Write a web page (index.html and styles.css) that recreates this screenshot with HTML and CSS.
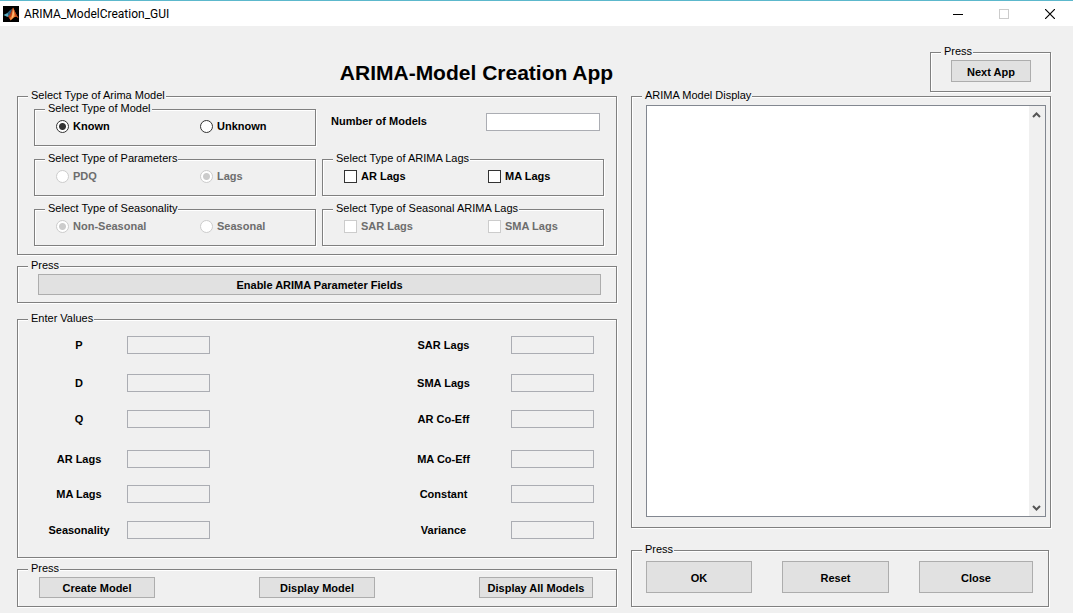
FILE: index.html
```html
<!DOCTYPE html>
<html lang="en">
<head>
<meta charset="utf-8">
<title>ARIMA_ModelCreation_GUI</title>
<link rel="stylesheet" href="styles.css">
</head>
<body>
<header class="titlebar">
  <svg class="app-icon" viewBox="0 0 16 16" width="16" height="16" aria-hidden="true">
    <rect width="16" height="16" fill="#000"/>
    <path d="M.5 9 L4.500 7 L7 4.500 L7.500 7 L5.500 11 L3.500 10.500Z" fill="#5fb0c4"/>
    <path d="M4.500 7 L8.500 3 L9 4 L7 9 L5.500 10.500Z" fill="#2b5f80"/>
    <path d="M10 1.500 C8.500 4 8 8 5 10.500 L7.500 14 C8.500 12.500 9 10.500 10.500 9.500 L10.500 2.500Z" fill="#b8401c"/>
    <path d="M10 1.500 C11.500 4 12.500 8 15.500 12 C13 10.500 12 10.500 11 11.500 L7.500 14.500 L6.500 12 C9 11 9.500 6 10 1.500Z" fill="#f07c2c"/>
    <path d="M10 3 L11 7 L10.500 10.500 L8 13.500 C9.500 10 9.500 7 10 3Z" fill="#fbc080"/>
    <path d="M10.500 2.500 C12 5 13 8.500 15.500 12 L12.500 10 C11.800 7.500 11 5 10.500 2.500Z" fill="#b8401c"/>
  </svg>
  <span class="titlebar-text">ARIMA_ModelCreation_GUI</span>
  <div class="window-controls">
    <button class="window-button" type="button" aria-label="Minimize"><svg width="10" height="10" viewBox="0 0 10 10" shape-rendering="crispEdges"><path d="M0 5.500H10" stroke="#000" fill="none"/></svg></button>
    <button class="window-button" type="button" aria-label="Maximize" disabled><svg width="10" height="10" viewBox="0 0 10 10"><rect x=".5" y=".5" width="9" height="9" stroke="#ccc" fill="none"/></svg></button>
    <button class="window-button" type="button" aria-label="Close window"><svg width="10" height="10" viewBox="0 0 10 10"><path d="M0 0L10 10M10 0L0 10" stroke="#000" stroke-width="1.200" fill="none"/></svg></button>
  </div>
</header>

<div class="heading">
  <h1 class="title">ARIMA-Model Creation App</h1>
  <fieldset class="panel">
    <legend>Press</legend>
    <div class="next-body"><button class="push push-next" type="button">Next App</button></div>
  </fieldset>
</div>

<main class="workspace">
  <div class="column column-left">
    <fieldset class="panel">
      <legend>Select Type of Arima Model</legend>
      <div class="model-grid">
        <fieldset class="panel">
          <legend>Select Type of Model</legend>
          <div class="options">
            <label class="option"><input type="radio" name="model" checked>Known</label>
            <label class="option"><input type="radio" name="model">Unknown</label>
          </div>
        </fieldset>
        <div class="count">
          <label for="count">Number of Models</label>
          <input class="field count-field" id="count" type="text">
        </div>
        <fieldset class="panel">
          <legend>Select Type of Parameters</legend>
          <div class="options">
            <label class="option"><input type="radio" name="params" disabled>PDQ</label>
            <label class="option"><input type="radio" name="params" checked disabled>Lags</label>
          </div>
        </fieldset>
        <fieldset class="panel">
          <legend>Select Type of ARIMA Lags</legend>
          <div class="options">
            <label class="option"><input type="checkbox">AR Lags</label>
            <label class="option"><input type="checkbox">MA Lags</label>
          </div>
        </fieldset>
        <fieldset class="panel">
          <legend>Select Type of Seasonality</legend>
          <div class="options">
            <label class="option"><input type="radio" name="season" checked disabled>Non-Seasonal</label>
            <label class="option"><input type="radio" name="season" disabled>Seasonal</label>
          </div>
        </fieldset>
        <fieldset class="panel">
          <legend>Select Type of Seasonal ARIMA Lags</legend>
          <div class="options">
            <label class="option"><input type="checkbox" disabled>SAR Lags</label>
            <label class="option"><input type="checkbox" disabled>SMA Lags</label>
          </div>
        </fieldset>
      </div>
    </fieldset>

    <fieldset class="panel enable-panel">
      <legend>Press</legend>
      <div class="enable-body"><button class="push" type="button">Enable ARIMA Parameter Fields</button></div>
    </fieldset>

    <fieldset class="panel values-panel">
      <legend>Enter Values</legend>
      <div class="values">
        <label class="value-label" for="p">P</label><input class="field" id="p" type="text" disabled>
        <label class="value-label second" for="sar">SAR Lags</label><input class="field" id="sar" type="text" disabled>
        <label class="value-label" for="d">D</label><input class="field" id="d" type="text" disabled>
        <label class="value-label second" for="sma">SMA Lags</label><input class="field" id="sma" type="text" disabled>
        <label class="value-label" for="q">Q</label><input class="field" id="q" type="text" disabled>
        <label class="value-label second" for="arc">AR Co-Eff</label><input class="field" id="arc" type="text" disabled>
        <label class="value-label" for="ar">AR Lags</label><input class="field" id="ar" type="text" disabled>
        <label class="value-label second" for="mac">MA Co-Eff</label><input class="field" id="mac" type="text" disabled>
        <label class="value-label" for="ma">MA Lags</label><input class="field" id="ma" type="text" disabled>
        <label class="value-label second" for="const">Constant</label><input class="field" id="const" type="text" disabled>
        <label class="value-label" for="seas">Seasonality</label><input class="field" id="seas" type="text" disabled>
        <label class="value-label second" for="var">Variance</label><input class="field" id="var" type="text" disabled>
      </div>
    </fieldset>

    <fieldset class="panel create-panel">
      <legend>Press</legend>
      <div class="create-body">
        <button class="push" type="button">Create Model</button>
        <button class="push" type="button">Display Model</button>
        <button class="push" type="button">Display All Models</button>
      </div>
    </fieldset>
  </div>

  <div class="column column-right">
    <fieldset class="panel display-panel">
      <legend>ARIMA Model Display</legend>
      <div class="display-body">
        <div class="listing">
          <textarea class="listing-text" aria-label="ARIMA Model Display"></textarea>
          <div class="scrollbar">
            <button class="scroll-button" type="button" aria-label="Scroll up"><svg width="9" height="7" viewBox="0 0 9 7"><path d="M1 6L4.500 2.500L8 6" stroke="#555" stroke-width="2" fill="none"/></svg></button>
            <button class="scroll-button" type="button" aria-label="Scroll down"><svg width="9" height="7" viewBox="0 0 9 7"><path d="M1 2L4.500 5.500L8 2" stroke="#555" stroke-width="2" fill="none"/></svg></button>
          </div>
        </div>
      </div>
    </fieldset>
    <fieldset class="panel finish-panel">
      <legend>Press</legend>
      <div class="finish-body">
        <button class="push push-tall" type="button">OK</button>
        <button class="push push-tall" type="button">Reset</button>
        <button class="push push-tall" type="button">Close</button>
      </div>
    </fieldset>
  </div>
</main>
</body>
</html>
```
FILE: styles.css
```css
*, *::before, *::after { box-sizing: border-box; }

body {
  margin: 0;
  min-height: 100vh;
  display: flex;
  flex-direction: column;
  background: #f0f0f0;
  color: #000;
  font: bold 11px/13px "Liberation Sans", Arial, sans-serif;
}

button, input, textarea { font: inherit; color: inherit; margin: 0; }

/* Title bar */
.titlebar {
  display: flex;
  align-items: center;
  height: 26px;
  padding-left: 3px;
  background: #fff;
  border-top: 1px solid #5cb8cc;
}
.app-icon { display: block; }
.titlebar-text {
  margin-left: 5px;
  font: 12px/16px Roboto, "Open Sans", sans-serif;
}
.window-controls { display: flex; margin-left: auto; }
.window-button {
  display: flex;
  align-items: center;
  justify-content: center;
  width: 46px;
  height: 25px;
  padding: 0;
  border: 0;
  background: none;
}

/* Heading */
.heading {
  display: flex;
  align-items: flex-start;
  padding: 20px 22px 0 17px;
}
.title {
  flex: 1;
  margin: 15px 0 0;
  padding-left: 6px;
  font-size: 21px;
  line-height: 24px;
  text-align: center;
}

/* Etched group box */
.panel {
  min-width: 0;
  margin: 0;
  padding: 0;
  border: 1px solid #808080;
  box-shadow: 1px 1px 0 #fff, inset 1px 1px 0 #fff;
}
.panel > legend {
  margin-left: 10px;
  padding: 0 1px 2px 3px;
  background: #f0f0f0;
  font-weight: normal;
  line-height: 11px;
}

.next-body { padding: 1px 19px 9px 20px; }

/* Push buttons */
.push {
  display: block;
  width: 100%;
  height: 21px;
  padding: 2px 0 0;
  border: 1px solid #adadad;
  background: #e1e1e1;
  text-align: center;
  white-space: nowrap;
}
.push-next { width: 80px; height: 22px; }
.push-tall { height: 32px; }

/* Text fields */
.field {
  width: 100%;
  min-width: 0;
  height: 18px;
  padding: 0 3px;
  border: 1px solid #abadb3;
  border-radius: 0;
  background: #fff;
}
.field:disabled { background: #f0f0f0; }

/* Two columns */
.workspace {
  flex: 1;
  display: grid;
  grid-template-columns: 600fr 420fr;
  gap: 14px;
  margin-top: -2px;
  padding: 0 22px 6px 17px;
}
.column { display: flex; flex-direction: column; min-width: 0; }

.model-grid {
  display: grid;
  grid-template-columns: 1fr 1fr;
  gap: 7px 6px;
  padding: 0 12px 8px 16px;
}
.options {
  display: grid;
  grid-template-columns: 144fr 115fr;
  padding: 0 0 9px 21px;
}
.option {
  display: flex;
  align-items: center;
  gap: 4px;
  height: 20px;
}
.option input {
  appearance: none;
  flex: none;
  width: 13px;
  height: 13px;
  border: 1px solid #333;
  background: #fff;
}
.option input[type="radio"] { border-radius: 50%; }
.option input[type="radio"]:checked {
  background: radial-gradient(circle, #333 0 3px, #fff 4px);
}
.option:has(input:disabled) { color: #6d6d6d; }
.option input:disabled { border-color: #ccc; }
.option input[type="radio"]:checked:disabled {
  background: radial-gradient(circle, #ccc 0 3px, #fff 4px);
}

.count {
  display: flex;
  align-items: flex-start;
  align-self: start;
  justify-content: space-between;
  padding: 10px 4px 0 9px;
}
.count-field { width: 114px; }
.count label { padding-top: 2px; }

.enable-panel { margin-top: 5px; }
.enable-body { padding: 1px 15px 7px 20px; }

.values-panel { margin-top: 10px; }
.values {
  display: grid;
  grid-template-columns: 91fr 83fr 191fr 110fr 83fr;
  grid-template-rows: 38px 36px 40px 35px 36px 18px;
  align-items: start;
  padding: 10px 22px 18px 18px;
}
.value-label {
  padding: 3px 5px 0 0;
  text-align: center;
}
.value-label.second { grid-column: 4; padding-right: 25px; }

.create-panel { margin-top: 5px; }
.create-body {
  display: grid;
  grid-template-columns: 116fr 116fr 114fr;
  gap: 104px;
  padding: 1px 23px 8px 21px;
}

.display-panel {
  flex: 1;
  display: flex;
  flex-direction: column;
}
.display-body {
  flex: 1;
  display: flex;
  padding: 2px 4px 10px 14px;
}
.listing {
  flex: 1;
  display: flex;
  border: 1px solid #828790;
  background: #fff;
}
.listing-text {
  flex: 1;
  min-width: 0;
  border: 0;
  padding: 3px;
  background: #fff;
  resize: none;
}
.scrollbar {
  display: flex;
  flex-direction: column;
  justify-content: space-between;
  width: 16px;
  background: #f0f0f0;
}
.scroll-button {
  display: flex;
  align-items: center;
  justify-content: center;
  width: 16px;
  height: 17px;
  padding: 0 1px 0 0;
  border: 0;
  background: none;
}

.finish-panel { margin: 16px 2px 0 0; }
.finish-body {
  display: grid;
  grid-template-columns: 106fr 107fr 114fr;
  gap: 30px;
  padding: 4px 15px 13px 14px;
}
```
